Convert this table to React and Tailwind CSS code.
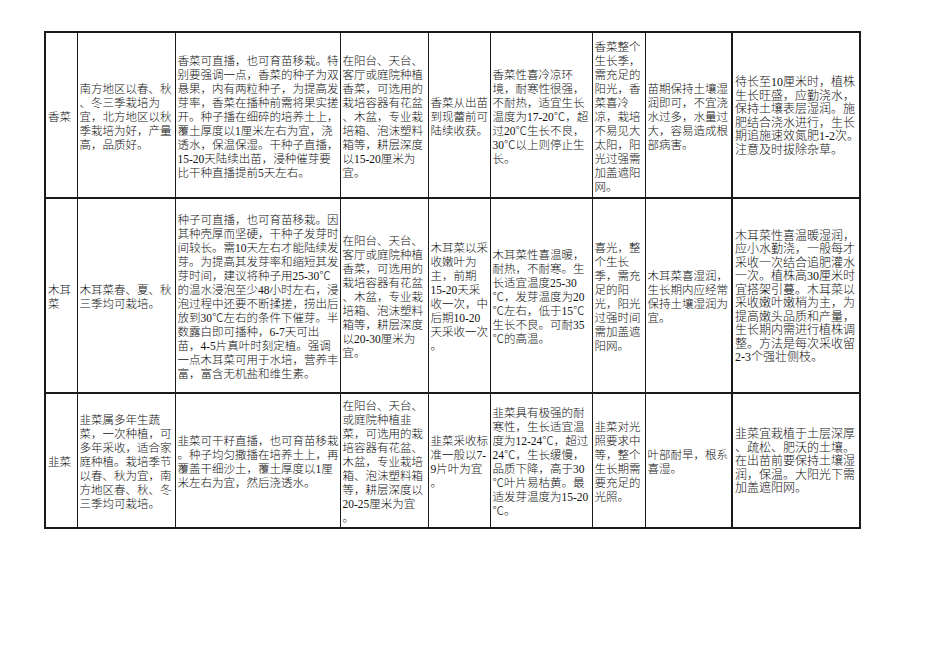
import React from 'react';

const widths = [32, 98, 165, 88, 62, 102, 53, 87, 128];

const rows = [
    {
        h: 'h-[166px]',
        cells: [
            ['香菜'],
            ['南方地区以春、秋', '、冬三季栽培为', '宜，北方地区以秋', '季栽培为好，产量', '高，品质好。'],
            ['香菜可直播，也可育苗移栽。特', '别要强调一点，香菜的种子为双', '悬果，内有两粒种子，为提高发', '芽率，香菜在播种前需将果实搓', '开。种子播在细碎的培养土上，', '覆土厚度以1厘米左右为宜，浇', '透水，保温保湿。干种子直播，', '15-20天陆续出苗，浸种催芽要', '比干种直播提前5天左右。'],
            ['在阳台、天台、', '客厅或庭院种植', '香菜，可选用的', '栽培容器有花盆', '、木盆，专业栽', '培箱、泡沫塑料', '箱等，耕层深度', '以15-20厘米为', '宜。'],
            ['香菜从出苗', '到现蕾前可', '陆续收获。'],
            ['香菜性喜冷凉环', '境，耐寒性很强，', '不耐热，适宜生长', '温度为17-20℃，超', '过20℃生长不良，', '30℃以上则停止生', '长。'],
            ['香菜整个', '生长季，', '需充足的', '阳光，香', '菜喜冷', '凉，栽培', '不易见大', '太阳，阳', '光过强需', '加盖遮阳', '网。'],
            ['苗期保持土壤湿', '润即可，不宜浇', '水过多，水量过', '大，容易造成根', '部病害。'],
            ['待长至10厘米时，植株', '生长旺盛，应勤浇水，', '保持土壤表层湿润。施', '肥结合浇水进行，生长', '期追施速效氮肥1-2次。', '注意及时拔除杂草。'],
        ],
    },
    {
        h: 'h-[195px]',
        cells: [
            ['木耳', '菜'],
            ['木耳菜春、夏、秋', '三季均可栽培。'],
            ['种子可直播，也可育苗移栽。因', '其种壳厚而坚硬，干种子发芽时', '间较长。需10天左右才能陆续发', '芽。为提高其发芽率和缩短其发', '芽时间，建议将种子用25-30℃', '的温水浸泡至少48小时左右，浸', '泡过程中还要不断揉搓，捞出后', '放到30℃左右的条件下催芽。半', '数露白即可播种，6-7天可出', '苗，4-5片真叶时刻定植。强调', '一点木耳菜可用于水培，营养丰', '富，富含无机盐和维生素。'],
            ['在阳台、天台、', '客厅或庭院种植', '香菜，可选用的', '栽培容器有花盆', '、木盆，专业栽', '培箱、泡沫塑料', '箱等，耕层深度', '以20-30厘米为', '宜。'],
            ['木耳菜以采', '收嫩叶为', '主，前期', '15-20天采', '收一次，中', '后期10-20', '天采收一次', '。'],
            ['木耳菜性喜温暖，', '耐热，不耐寒。生', '长适宜温度25-30', '℃，发芽温度为20', '℃左右，低于15℃', '生长不良。可耐35', '℃的高温。'],
            ['喜光，整', '个生长', '季，需充', '足的阳', '光，阳光', '过强时间', '需加盖遮', '阳网。'],
            ['木耳菜喜湿润，', '生长期内应经常', '保持土壤湿润为', '宜。'],
            ['木耳菜性喜温暖湿润，', '应小水勤浇，一般每才', '采收一次结合追肥灌水', '一次。植株高30厘米时', '宜搭架引蔓。木耳菜以', '采收嫩叶嫩梢为主，为', '提高嫩头品质和产量，', '生长期内需进行植株调', '整。方法是每次采收留', '2-3个强壮侧枝。'],
        ],
    },
    {
        h: 'h-[135px]',
        cells: [
            ['韭菜'],
            ['韭菜属多年生蔬', '菜，一次种植，可', '多年采收，适合家', '庭种植。栽培季节', '以春、秋为宜，南', '方地区春、秋、冬', '三季均可栽培。'],
            ['韭菜可干籽直播，也可育苗移栽', '。种子均匀撒播在培养土上，再', '覆盖干细沙土，覆土厚度以1厘', '米左右为宜，然后浇透水。'],
            ['在阳台、天台、', '或庭院种植韭', '菜，可选用的栽', '培容器有花盆、', '木盆，专业栽培', '箱、泡沫塑料箱', '等，耕层深度以', '20-25厘米为宜', '。'],
            ['韭菜采收标', '准一般以7-', '9片叶为宜', '。'],
            ['韭菜具有极强的耐', '寒性，生长适宜温', '度为12-24℃，超过', '24℃，生长缓慢，', '品质下降，高于30', '℃叶片易枯黄。最', '适发芽温度为15-20', '℃。'],
            ['韭菜对光', '照要求中', '等，整个', '生长期需', '要充足的', '光照。'],
            ['叶部耐旱，根系', '喜湿。'],
            ['韭菜宜栽植于土层深厚', '、疏松、肥沃的土壤。', '在出苗前要保持土壤湿', '润，保温。大阳光下需', '加盖遮阳网。'],
        ],
    },
];

const Cell = ({ lines, col }) => {
    // column 8 has the heavy rule on its right side
    const edge = col === 7 ? 'border-r-2' : '';
    const size = col === 8 ? 'text-[12px] leading-[13.5px]' : 'text-[11.5px] leading-[14px]';
    return (
        <td className={`border border-[#1a1a1a] border-b-2 align-middle px-[2px] pt-[3px] pb-0 ${edge}`}>
            <div className={`${size} font-light text-[#111] whitespace-nowrap`}>
                {lines.map((line, i) => (
                    <div key={i}>{line}</div>
                ))}
            </div>
        </td>
    );
};

const App = () => {
    return (
        <div
            className="min-h-screen w-[950px] bg-white pt-[31px] pl-[44px]"
            style={{ fontFamily: '"Liberation Serif", "Noto Sans CJK SC", serif' }}
        >
            <table className="table-fixed border-collapse border-2 border-[#1a1a1a] w-[817px]">
                <colgroup>
                    {widths.map((w, i) => (
                        <col key={i} style={{ width: w }} />
                    ))}
                </colgroup>
                <tbody>
                    {rows.map((row, r) => (
                        <tr key={r} className={row.h}>
                            {row.cells.map((lines, c) => (
                                <Cell key={c} lines={lines} col={c} />
                            ))}
                        </tr>
                    ))}
                </tbody>
            </table>
        </div>
    );
};

export default App;
